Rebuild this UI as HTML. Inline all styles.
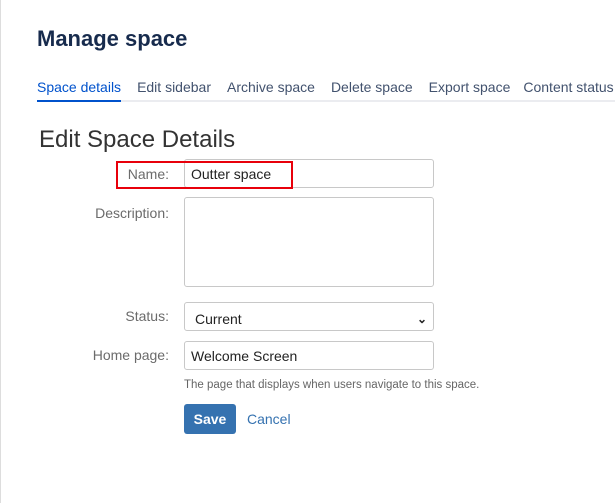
<!DOCTYPE html>
<html><head><style>
body{margin:0;width:615px;height:503px;background:#fff;font-family:"Liberation Sans",sans-serif;position:relative;overflow:hidden;color:#172b4d}
.a{position:absolute;white-space:nowrap}
.lbl{position:absolute;right:446px;font-size:14px;color:#6b6b6b;text-align:right}
.box{position:absolute;left:184px;width:250px;border:1px solid #c8c8c8;border-radius:3px;background:#fff;font-size:14px;color:#222;box-sizing:border-box;padding-left:6px}
</style></head><body>
<div class="a" style="left:0;top:0;width:1px;height:503px;background:#ddd"></div>
<div class="a" style="left:37px;top:26px;font-size:22px;font-weight:bold;color:#172b4d">Manage space</div>
<div class="a" style="left:37px;top:79px;font-size:14px;color:#42526e">
<span style="color:#0052cc">Space details</span><span style="margin-left:16px">Edit sidebar</span><span style="margin-left:16px">Archive space</span><span style="margin-left:16px">Delete space</span><span style="margin-left:16px">Export space</span><span style="margin-left:13px">Content status</span></div>
<div class="a" style="left:37px;top:100px;width:578px;height:2px;background:#ebecf0"></div>
<div class="a" style="left:37px;top:100px;width:84px;height:2px;background:#0052cc"></div>
<div class="a" style="left:39px;top:126px;font-size:24px;color:#333">Edit Space Details</div>
<div class="lbl" style="top:166px">Name:</div>
<div class="box" style="top:159px;height:29px;line-height:29px">Outter space</div>
<div class="a" style="left:116px;top:161px;width:173px;height:24px;border:2px solid #e8000b"></div>
<div class="lbl" style="top:205px">Description:</div>
<div class="box" style="top:197px;height:90px"></div>
<div class="lbl" style="top:308px">Status:</div>
<div class="box" style="top:302px;height:29px;line-height:33px;padding-left:10px">Current<span style="position:absolute;right:6px;top:0;font-size:12px;font-weight:bold">&#8964;</span></div>
<div class="lbl" style="top:347px">Home page:</div>
<div class="box" style="top:341px;height:29px;line-height:29px">Welcome Screen</div>
<div class="a" style="left:184px;top:379px;font-size:11.5px;color:#666">The page that displays when users navigate to this space.</div>
<div class="a" style="left:184px;top:404px;width:52px;height:30px;background:#3572b0;border-radius:3px;color:#fff;font-weight:bold;font-size:14px;text-align:center;line-height:30px">Save</div>
<div class="a" style="left:247px;top:411px;font-size:14px;color:#3572b0">Cancel</div>
</body></html>
